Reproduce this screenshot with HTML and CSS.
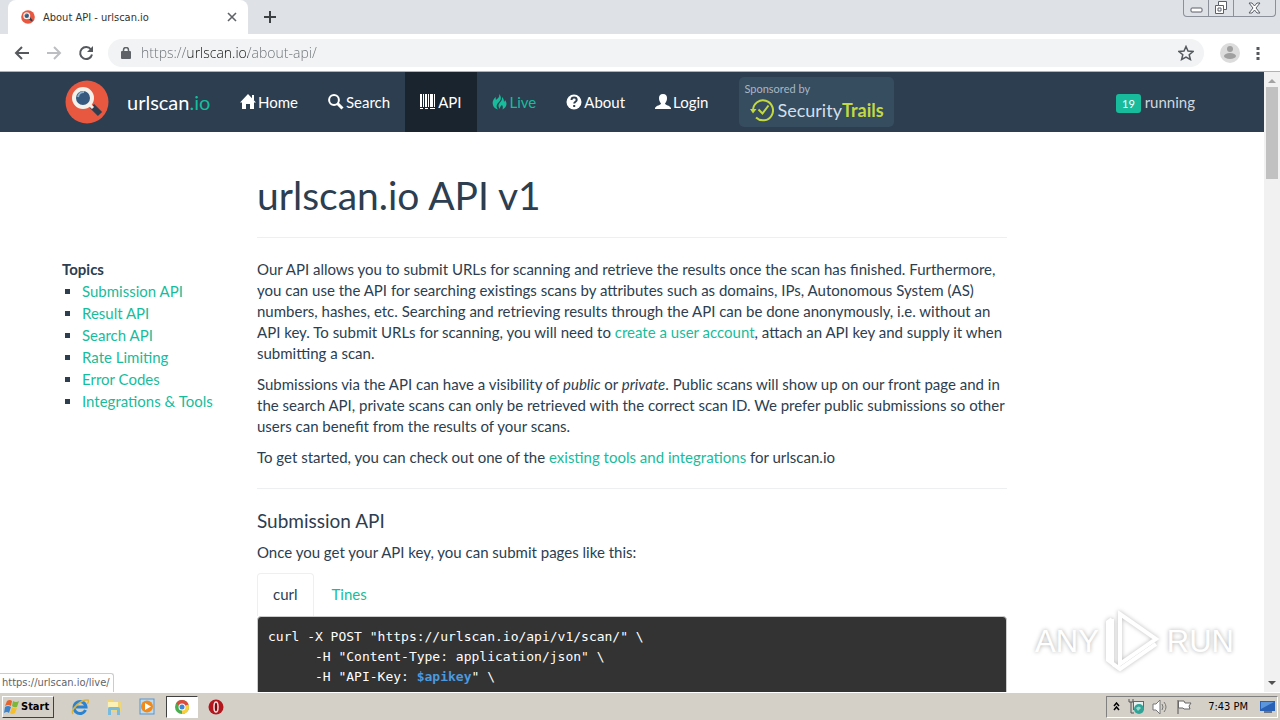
FILE: index.html
```html
<!DOCTYPE html>
<html lang="en">
<head>
<meta charset="UTF-8">
<meta name="viewport" content="width=device-width, initial-scale=1.0">
<title>About API - urlscan.io</title>
<link rel="stylesheet" href="styles.css">
</head>
<body>
    <!-- shared logo, used in the tab and in the navbar -->
    <svg class="defs" width="0" height="0">
        <symbol id="logo" viewBox="0 0 44 44">
            <circle cx="22" cy="22" r="21.500" fill="#e8573f"/>
            <path d="M27 26l8 8" stroke="#2c3e50" stroke-width="6"/>
            <path d="M23 23l5 5" stroke="#f4efe6" stroke-width="3"/>
            <circle cx="18" cy="18" r="9" fill="#35597f" stroke="#f4f1ea" stroke-width="4"/>
            <path d="M13 17a6 6 0 0 1 6-5" fill="none" stroke="#8fb2cf" stroke-width="2"/>
        </symbol>
    </svg>

    <header class="browser">
        <div class="tab-strip">
            <div class="tab">
                <svg class="favicon" width="14" height="14"><use href="#logo"/></svg>
                <span class="tab-title">About API - urlscan.io</span>
                <button class="icon-btn" aria-label="Close tab">
                    <svg width="10" height="10" viewBox="0 0 10 10"><path d="M1 1l8 8M9 1l-8 8" stroke="#5f6368" stroke-width="1.600"/></svg>
                </button>
            </div>
            <button class="icon-btn new-tab" aria-label="New tab">
                <svg width="12" height="12" viewBox="0 0 12 12"><path d="M6 0v12M0 6h12" stroke="#3c4043" stroke-width="2"/></svg>
            </button>
            <div class="window-buttons">
                <button aria-label="Minimize"><svg width="13" height="6" viewBox="0 0 13 6"><rect x="1" y="1" width="11" height="4" rx="1" fill="#fff" stroke="#5a5f69"/></svg></button>
                <button aria-label="Restore"><svg width="14" height="14" viewBox="0 0 14 14"><path d="M4.500 .5h8v8h-3v4h-8v-8h3z" fill="#fff" stroke="#5a5f69"/><path d="M4.500 4.500h5v5M4 7h3v3h-3z" fill="none" stroke="#5a5f69"/></svg></button>
                <button class="wide" aria-label="Close"><svg width="13" height="12" viewBox="0 0 13 12"><path d="M1 1h3l2.500 3 2.500-3h3l-4 5 4 5h-3l-2.500-3-2.500 3h-3l4-5z" fill="#fff" stroke="#5a5f69"/></svg></button>
            </div>
        </div>
        <div class="toolbar">
            <button class="icon-btn" aria-label="Back"><svg width="16" height="16" viewBox="0 0 16 16"><path d="M15 8H2M8 2L2 8l6 6" fill="none" stroke="#55595e" stroke-width="2"/></svg></button>
            <button class="icon-btn" aria-label="Forward"><svg width="16" height="16" viewBox="0 0 16 16"><path d="M1 8h13M8 2l6 6-6 6" fill="none" stroke="#bcbec1" stroke-width="2"/></svg></button>
            <button class="icon-btn" aria-label="Reload"><svg width="16" height="16" viewBox="0 0 16 16"><path d="M13 4.500A6 6 0 1 0 14 9.500" fill="none" stroke="#55595e" stroke-width="2"/><path d="M15 1v6H9z" fill="#55595e"/></svg></button>
            <div class="omnibox">
                <svg width="10" height="12" viewBox="0 0 10 12"><rect x="0" y="4" width="10" height="8" rx="1" fill="#5f6368"/><path d="M2.500 5V3a2.500 2.500 0 0 1 5 0v2" fill="none" stroke="#5f6368" stroke-width="1.500"/></svg>
                <input class="address" type="text" aria-label="Address" value="https://urlscan.io/about-api/">
                <button class="icon-btn" aria-label="Bookmark"><svg width="16" height="16" viewBox="0 0 16 16"><path d="M8 1.500l2 4.500 5 .5-3.800 3.200 1.200 4.800L8 12l-4.400 2.500 1.200-4.800L1 6.500 6 6z" fill="none" stroke="#55595e" stroke-width="1.500"/></svg></button>
            </div>
            <button class="icon-btn" aria-label="Profile"><svg width="20" height="20" viewBox="0 0 20 20"><circle cx="10" cy="10" r="10" fill="#dcdcdc"/><circle cx="10" cy="6" r="3" fill="#a0a0a0"/><ellipse cx="10" cy="13" rx="6" ry="3" fill="#a0a0a0"/></svg></button>
            <button class="icon-btn" aria-label="Menu"><svg width="4" height="14" viewBox="0 0 4 14"><path d="M.5 1h3v3h-3zM.5 6h3v3h-3zM.5 11h3v3h-3z" fill="#55595e"/></svg></button>
        </div>
    </header>

    <div class="viewport">
        <div class="page">
            <nav class="navbar">
                <div class="container nav-inner">
                    <a class="brand" href="#"><svg width="44" height="44"><use href="#logo"/></svg><span>urlscan<span class="green">.io</span></span></a>
                    <a class="nav-link" href="#"><svg width="16" height="16" viewBox="0 0 16 16"><path d="M8 0l8 8.500h-2V15h-4v-5H6v5H2V8.500H0zM12 1h2v5h-2z"/></svg>Home</a>
                    <a class="nav-link" href="#"><svg width="16" height="16" viewBox="0 0 16 16"><circle cx="6" cy="6" r="4.900" fill="none" stroke="currentColor" stroke-width="2"/><path d="M9.500 9.500l5 5" stroke="currentColor" stroke-width="3"/></svg>Search</a>
                    <a class="nav-link active" href="#"><svg width="16" height="16" viewBox="0 0 16 16"><path d="M0 0h2v13H0zM3 0h1v13H3zM5 0h2v13H5zM8 0h1v13H8zM10 0h3v13h-3zM14 0h1v13h-1zM0 14h3v1H0zM5 14h3v1H5zM10 14h5v1h-5z"/></svg>API</a>
                    <a class="nav-link green" href="#"><svg width="16" height="16" viewBox="0 0 16 16"><path d="M7 0c1 3-1 4-3 6-.5-1 0-2-.5-3C1 6 0 8 1 11c.5 2 2 3.500 5 4.500-2.500-3.500-1-5.500 1-7.500 2-2 3-5 0-8zM10 3c.5 3-1 4-2.500 6C6 11 6 13 8 15c-.3-2 .7-3 2-4 1 1 1 3 .5 4.500C15 13 15.500 9 13 6c-.3 1-.5 1.500-1 2 0-2-.5-4-2-5z"/></svg>Live</a>
                    <a class="nav-link" href="#"><svg width="16" height="16" viewBox="0 0 16 16"><circle cx="8" cy="8" r="7.500"/><path d="M5.500 6c0-3.200 5.200-3.200 5.200 0 0 1.700-2.500 1.800-2.500 3.500M8.200 11v2" fill="none" stroke="#2c3e50" stroke-width="2"/></svg>About</a>
                    <a class="nav-link" href="#"><svg width="16" height="16" viewBox="0 0 16 16"><path d="M8 0c3 0 4 2 4 4 0 3-1 4-2 5.500 0 1.500 5 2 6 4.500v1H0v-1c1-2.500 6-3 6-4.500C5 8 4 7 4 4c0-2 1-4 4-4z"/></svg>Login</a>
                    <a class="sponsor" href="#">
                        <span class="sponsor-label">Sponsored by</span>
                        <span class="sponsor-name">
                            <svg width="24" height="24" viewBox="0 0 24 24"><path d="M3 12A10 10 0 1 1 6 19.500" fill="none" stroke="#c3d941" stroke-width="2"/><path d="M0 11h6.500L3 15.500z" fill="#c3d941"/><path d="M8.500 11.500l4 4 6-8" fill="none" stroke="#c3d941" stroke-width="2"/></svg>
                            <span>Security<b>Trails</b></span>
                        </span>
                    </a>
                    <div class="running"><span class="count">19</span> running</div>
                </div>
            </nav>

            <div class="container columns">
                <aside class="topics">
                    <strong>Topics</strong>
                    <ul>
                        <li><a href="#">Submission API</a></li>
                        <li><a href="#">Result API</a></li>
                        <li><a href="#">Search API</a></li>
                        <li><a href="#">Rate Limiting</a></li>
                        <li><a href="#">Error Codes</a></li>
                        <li><a href="#">Integrations &amp; Tools</a></li>
                    </ul>
                </aside>
                <main>
                    <h1>urlscan.io API v1</h1>
                    <hr>
                    <p>Our API allows you to submit URLs for scanning and retrieve the results once the scan has finished. Furthermore, you can use the API for searching existings scans by attributes such as domains, IPs, Autonomous System (AS) numbers, hashes, etc. Searching and retrieving results through the API can be done anonymously, i.e. without an API key. To submit URLs for scanning, you will need to <a href="#">create a user account</a>, attach an API key and supply it when submitting a scan.</p>
                    <p>Submissions via the API can have a visibility of <em>public</em> or <em>private</em>. Public scans will show up on our front page and in the search API, private scans can only be retrieved with the correct scan ID. We prefer public submissions so other users can benefit from the results of your scans.</p>
                    <p>To get started, you can check out one of the <a href="#">existing tools and integrations</a> for urlscan.io</p>
                    <hr>
                    <h2>Submission API</h2>
                    <p>Once you get your API key, you can submit pages like this:</p>
                    <div class="code-tabs">
                        <a class="active" href="#">curl</a>
                        <a href="#">Tines</a>
                    </div>
<pre>curl -X POST "https://urlscan.io/api/v1/scan/" \
      -H "Content-Type: application/json" \
      -H "API-Key: <b>$apikey</b>" \</pre>
                </main>
            </div>
        </div>

        <div class="scrollbar">
            <svg width="8" height="4" viewBox="0 0 8 4"><path d="M4 0l4 4H0z" fill="#a3a3a3"/></svg>
            <div class="thumb"></div>
            <svg class="down" width="8" height="4" viewBox="0 0 8 4"><path d="M0 0h8L4 4z" fill="#505050"/></svg>
        </div>

        <div class="status">https://urlscan.io/live/</div>
        <div class="watermark">
            <span>ANY</span>
            <svg width="60" height="66" viewBox="0 0 60 66"><g fill="none" stroke="#fff" stroke-width="4"><path d="M17 6l36 25-36 25z"/><path d="M9 11l-4 3v38l4 3V11"/><path d="M10 56l7 5 36-25"/></g></svg>
            <span>RUN</span>
        </div>
    </div>

    <footer class="taskbar">
        <button class="start">
            <svg width="16" height="16" viewBox="0 0 16 16"><path d="M3 2q3-2 5 0L7 7Q4 5 1 7z" fill="#e5632d"/><path d="M9 2q3 2 6 0l-2 6q-3 1-5-1z" fill="#7eb63c"/><path d="M1 8q3-2 6 0l-2 6q-2-2-5 0z" fill="#3b83cc"/><path d="M8 8q2 2 5 1l-2 5q-3 2-5 0z" fill="#f3bf2f"/></svg>
            Start
        </button>
        <button class="task" aria-label="Internet Explorer"><svg width="18" height="18" viewBox="0 0 18 18"><path d="M14.500 12A6 6 0 1 1 15 9H5" fill="none" stroke="#2a83d0" stroke-width="3"/><path d="M2 16C-1 12 10 1 17 2c1 1 0 3-1 4" fill="none" stroke="#e0b43b" stroke-width="1.500"/></svg></button>
        <button class="task" aria-label="Explorer"><svg width="18" height="18" viewBox="0 0 18 18"><path d="M2 2h6l1 2h7v10H2z" fill="#f0d67a"/><path d="M3 4h10v5H3z" fill="#fbf0b5"/><path d="M3 17v-6q0-2 2-2h8q2 0 2 2v6h-3v-5H6v5z" fill="#77bbdf"/></svg></button>
        <button class="task" aria-label="Media Player"><svg width="18" height="18" viewBox="0 0 18 18"><rect x="1" y="1" width="14" height="15" fill="#b8dcf6" stroke="#5a94c9"/><circle cx="8" cy="8.500" r="6" fill="#f08a1d"/><path d="M6 5l6 3.500L6 12z" fill="#fff"/></svg></button>
        <button class="task open" aria-label="Chrome"><svg width="16" height="16" viewBox="0 0 16 16"><circle cx="8" cy="8" r="7" fill="#4cad50"/><path d="M8 8L2 4.400A7 7 0 0 1 14.500 5.500z" fill="#dd4b3e"/><path d="M8 8l6.500-2.500A7 7 0 0 1 8 15z" fill="#f9cf3b"/><circle cx="8" cy="8" r="3.500" fill="#fff"/><circle cx="8" cy="8" r="2.500" fill="#4285d6"/></svg></button>
        <button class="task" aria-label="Opera"><svg width="16" height="16" viewBox="0 0 16 16"><circle cx="8" cy="8" r="7.500" fill="#b3171d"/><ellipse cx="8" cy="8" rx="2" ry="5" fill="#7c090e" stroke="#f5dede" stroke-width="1.500"/></svg></button>
        <div class="tray">
            <svg width="7" height="9" viewBox="0 0 7 9"><path d="M1 4l2.500-3L6 4M1 8l2.500-3L6 8" fill="none" stroke="#000" stroke-width="1.500"/></svg>
            <svg width="16" height="16" viewBox="0 0 16 16"><path d="M1 0v3h4V0M3 3v11h3" fill="none" stroke="#555"/><rect x="5.500" y="2.500" width="10" height="8" fill="#e9f0ef" stroke="#666"/><circle cx="11" cy="10" r="5" fill="#31a397"/><path d="M8 9q3-3 5 0l-3 3z" fill="#9bd8cb"/></svg>
            <svg width="16" height="16" viewBox="0 0 16 16"><path d="M1 5h3l4-4v14l-4-4H1z" fill="#fff" stroke="#777"/><path d="M10 5q2 3 0 6M12 3q4 5 0 10" fill="none" stroke="#777"/></svg>
            <svg width="16" height="16" viewBox="0 0 16 16"><path d="M2 1v14" stroke="#555"/><path d="M2.500 2H8l1 2h6l-2 3 1 3H8L7 9H2.500z" fill="#fff" stroke="#666"/></svg>
            <span class="clock">7:43 PM</span>
            <svg width="16" height="13" viewBox="0 0 16 13"><path d="M0 1h15v10H0z" fill="#2861b6"/><path d="M1 2h13L1 9z" fill="#5b96dd"/><path d="M4 12h8" stroke="#6d7681" stroke-width="2"/></svg>
        </div>
    </footer>
</body>
</html>
```
FILE: styles.css
```css
* {
    box-sizing: border-box;
}
body {
    margin: 0;
    height: 100vh;
    display: flex;
    flex-direction: column;
    overflow: hidden;
    font-family: Lato, sans-serif;
    font-size: 15px;
    line-height: 21px;
    color: #2c3e50;
    background: #fff;
}
a {
    color: #18bc9c;
    text-decoration: none;
}
button {
    font-family: inherit;
    padding: 0;
    border: 0;
    background: none;
}
svg {
    display: block;
    flex: none;
}
.defs {
    position: absolute;
}
.green {
    color: #18bc9c;
}

/* browser frame */
.tab-strip {
    display: flex;
    height: 34px;
    background: #dee1e6;
}
.tab {
    display: flex;
    align-items: center;
    width: 240px;
    margin-left: 8px;
    padding: 0 11px 0 13px;
    background: #fff;
    border-radius: 8px 8px 0 0;
}
.tab-title {
    flex: 1;
    margin-left: 8px;
    font-family: "DejaVu Sans Condensed", "Open Sans", sans-serif;
    font-size: 11px;
    color: #333;
}
.icon-btn {
    display: flex;
    align-items: center;
    justify-content: center;
}
.new-tab {
    margin-left: 16px;
}
.window-buttons {
    display: flex;
    height: 17px;
    margin-left: auto;
    margin-right: 4px;
    border: 1px solid #8b9099;
    border-top: 0;
    border-radius: 0 0 4px 4px;
}
.window-buttons button {
    display: flex;
    align-items: center;
    justify-content: center;
    width: 25px;
    border-right: 1px solid #8b9099;
}
.window-buttons button.wide {
    width: 41px;
    border-right: 0;
}
.window-buttons button:first-child {
    align-items: flex-end;
    padding-bottom: 3px;
}
.toolbar {
    display: flex;
    align-items: center;
    gap: 16px;
    height: 38px;
    padding: 0 20px 0 14px;
    border-bottom: 1px solid #a9b4bb;
}
.omnibox {
    flex: 1;
    display: flex;
    align-items: center;
    height: 28px;
    margin-left: -2px;
    padding: 0 10px 0 13px;
    border-radius: 14px;
    background: #f1f3f4;
}
.address {
    flex: 1;
    min-width: 0;
    margin-left: 10px;
    padding: 0;
    border: 0;
    outline: 0;
    font-family: "Open Sans", sans-serif;
    font-size: 14px;
    font-weight: 300;
    /* host is darker than the rest of the address */
    background: linear-gradient(to right, #6a6e73 47px, #111 47px, #111 107px, #6a6e73 107px);
    -webkit-background-clip: text;
    background-clip: text;
    color: transparent;
}
.viewport {
    flex: 1;
    min-height: 0;
    display: flex;
    position: relative;
    overflow: hidden;
}
.page {
    flex: 1;
    min-width: 0;
    overflow: hidden;
}
.scrollbar {
    display: flex;
    flex-direction: column;
    align-items: center;
    width: 16px;
    padding: 7px 0;
    background: #f1f1f1;
}
.thumb {
    width: 12px;
    height: 92px;
    margin-top: 4px;
    background: #c1c1c1;
}
.down {
    margin-top: auto;
}

/* site */
.container {
    max-width: 1170px;
    margin: 0 auto;
    padding: 0 15px;
}
.navbar {
    background: #2c3e50;
}
.nav-inner {
    display: flex;
    align-items: center;
    height: 60px;
}
.brand {
    display: flex;
    align-items: center;
    gap: 18px;
    width: 163px;
    padding-left: 3px;
    font-size: 20px;
    color: #fff;
}
.nav-link {
    display: flex;
    align-items: center;
    gap: 2px;
    height: 60px;
    padding: 0 15px;
    color: #fff;
}
.nav-link svg {
    fill: currentColor;
}
.nav-link.active {
    background: #1a242f;
}
.nav-link.green {
    color: #18bc9c;
}
.sponsor {
    width: 155px;
    height: 50px;
    margin-left: 16px;
    padding: 3px 5px;
    border-radius: 5px;
    background: #364c5f;
}
.sponsor-label {
    display: block;
    font-size: 11px;
    line-height: 18px;
    color: #a9b7c4;
}
.sponsor-name {
    display: flex;
    align-items: center;
    gap: 3px;
    padding-left: 6px;
    font-size: 18px;
    color: #d3dfea;
}
.sponsor-name b {
    color: #c3d941;
}
.running {
    margin-left: auto;
    margin-right: 7px;
    color: #d0d8df;
}
.count {
    display: inline-block;
    padding: 0 6px;
    border-radius: 3px;
    font-size: 11px;
    line-height: 19px;
    color: #fff;
    background: #18bc9c;
}
.columns {
    display: flex;
}
.topics {
    flex: none;
    width: 195px;
    padding-top: 127px;
}
.topics ul {
    margin: 0;
    padding-left: 20px;
    list-style: square;
    line-height: 22px;
}
main {
    width: 750px;
}
h1 {
    margin: 42px 0 20px;
    font-size: 39px;
    font-weight: 400;
    line-height: 43px;
}
h2 {
    margin: 0 0 10px;
    font-size: 19px;
    font-weight: 400;
    line-height: 22px;
}
hr {
    margin: 20px 0 21px;
    border: 0;
    border-top: 1px solid #ecf0f1;
}
p {
    margin: 0 0 10px;
}
.code-tabs {
    display: flex;
    height: 43px;
}
.code-tabs a {
    padding: 11px 18px;
}
.code-tabs a.active {
    padding: 10px 15px;
    border: 1px solid #ecf0f1;
    border-bottom: 0;
    border-radius: 4px 4px 0 0;
    color: #2c3e50;
}
pre {
    margin: 0;
    padding: 10px;
    border: 1px solid #ccc;
    border-radius: 4px;
    font-family: "DejaVu Sans Mono", monospace;
    font-size: 13px;
    line-height: 20px;
    color: #fff;
    background: #333;
}
pre b {
    color: #4a9ae0;
}
.status {
    position: absolute;
    left: 0;
    bottom: 0;
    height: 19px;
    padding: 0 3px 0 2px;
    border: 1px solid #ccc;
    border-left: 0;
    border-bottom: 0;
    border-radius: 0 3px 0 0;
    font-family: "DejaVu Sans Condensed", "Open Sans", sans-serif;
    font-size: 11px;
    line-height: 18px;
    color: #5f6368;
    background: #fff;
}
.watermark {
    position: absolute;
    right: 46px;
    bottom: 18px;
    display: flex;
    align-items: center;
    gap: 4px;
    font-family: "Liberation Sans", sans-serif;
    font-size: 31px;
    color: #fff;
    text-shadow: 0 0 4px #aaa;
}
.watermark svg {
    filter: drop-shadow(0 0 2px #bbb);
}

/* taskbar */
.taskbar {
    display: flex;
    align-items: center;
    height: 28px;
    padding-left: 2px;
    border-top: 1px solid #fff;
    background: #d4d0c8;
    font-family: "DejaVu Sans Condensed", "Open Sans", sans-serif;
    font-size: 11px;
    color: #000;
}
.start {
    display: flex;
    align-items: center;
    gap: 1px;
    width: 52px;
    height: 22px;
    margin-right: 10px;
    padding-left: 1px;
    border: 1px solid;
    border-color: #fff #404040 #404040 #fff;
    font-size: 11px;
    font-weight: bold;
}
.task {
    display: flex;
    align-items: center;
    justify-content: center;
    width: 32px;
    height: 22px;
    margin-right: 2px;
}
.task.open {
    border: 1px solid;
    border-color: #404040 #fff #fff #404040;
    background: #fff;
}
.tray {
    display: flex;
    align-items: center;
    gap: 8px;
    height: 22px;
    margin-left: auto;
    margin-right: 2px;
    padding: 0 1px 0 6px;
    border: 1px solid;
    border-color: #808080 #fff #fff #808080;
}
.clock {
    margin: 0 4px 0 8px;
}
```
